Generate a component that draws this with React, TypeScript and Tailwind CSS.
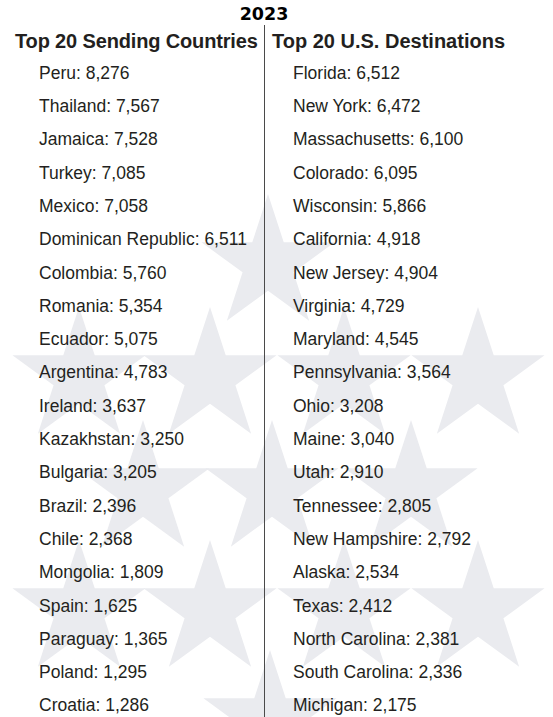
import React from "react";

const countries: [string, string][] = [
  ["Peru", "8,276"],
  ["Thailand", "7,567"],
  ["Jamaica", "7,528"],
  ["Turkey", "7,085"],
  ["Mexico", "7,058"],
  ["Dominican Republic", "6,511"],
  ["Colombia", "5,760"],
  ["Romania", "5,354"],
  ["Ecuador", "5,075"],
  ["Argentina", "4,783"],
  ["Ireland", "3,637"],
  ["Kazakhstan", "3,250"],
  ["Bulgaria", "3,205"],
  ["Brazil", "2,396"],
  ["Chile", "2,368"],
  ["Mongolia", "1,809"],
  ["Spain", "1,625"],
  ["Paraguay", "1,365"],
  ["Poland", "1,295"],
  ["Croatia", "1,286"],
];

const states: [string, string][] = [
  ["Florida", "6,512"],
  ["New York", "6,472"],
  ["Massachusetts", "6,100"],
  ["Colorado", "6,095"],
  ["Wisconsin", "5,866"],
  ["California", "4,918"],
  ["New Jersey", "4,904"],
  ["Virginia", "4,729"],
  ["Maryland", "4,545"],
  ["Pennsylvania", "3,564"],
  ["Ohio", "3,208"],
  ["Maine", "3,040"],
  ["Utah", "2,910"],
  ["Tennessee", "2,805"],
  ["New Hampshire", "2,792"],
  ["Alaska", "2,534"],
  ["Texas", "2,412"],
  ["North Carolina", "2,381"],
  ["South Carolina", "2,336"],
  ["Michigan", "2,175"],
];

const R = 70;
// [cx, topY]
const stars: [number, number][] = [
  [268, 194],
  [79, 307],
  [210, 307],
  [344, 307],
  [478, 307],
  [143, 420],
  [272, 420],
  [411, 420],
  [79, 540],
  [210, 540],
  [344, 540],
  [478, 540],
  [270, 650],
];

function starPoints(cx: number, top: number) {
  const cy = top + R;
  const r = R * 0.382;
  const pts: string[] = [];
  for (let i = 0; i < 10; i++) {
    const a = -Math.PI / 2 + (i * Math.PI) / 5;
    const rad = i % 2 === 0 ? R : r;
    pts.push(`${(cx + rad * Math.cos(a)).toFixed(2)},${(cy + rad * Math.sin(a)).toFixed(2)}`);
  }
  return pts.join(" ");
}

function Row({ label, value }: { label: string; value: string }) {
  return (
    <div className="h-[33.3px] leading-[33.3px] whitespace-nowrap">
      {label}: {value}
    </div>
  );
}

export default function App() {
  return (
    <div
      className="relative w-[553px] h-[717px] overflow-hidden bg-white text-[#231f20]"
      style={{ fontFamily: '"Liberation Sans", Arial, sans-serif' }}
    >
      <svg className="absolute inset-0" width="553" height="717" viewBox="0 0 553 717">
        {stars.map(([x, y], i) => (
          <polygon key={i} points={starPoints(x, y)} fill="#eaebef" />
        ))}
      </svg>
      <div className="relative">
        <div
          className="h-[25px] w-[528px] pt-[4px] text-center text-[17.5px] leading-[20px] font-bold text-black"
          style={{ fontFamily: '"DejaVu Sans", Verdana, sans-serif' }}
        >
          2023
        </div>
        <div className="flex">
          <div className="w-[265px] border-r border-[#4a4a4a] h-[700px]">
            <div className="h-[31.8px] pt-[3.7px] pl-[15px] text-[20px] leading-[24px] font-bold tracking-[-0.15px] whitespace-nowrap">
              Top 20 Sending Countries
            </div>
            <div className="pl-[39px] text-[17.5px]">
              {countries.map(([l, v]) => (
                <Row key={l} label={l} value={v} />
              ))}
            </div>
          </div>
          <div className="flex-1">
            <div className="h-[31.8px] pt-[3.7px] pl-[7px] text-[20px] leading-[24px] font-bold whitespace-nowrap">
              Top 20 U.S. Destinations
            </div>
            <div className="pl-[28px] text-[17.5px]">
              {states.map(([l, v]) => (
                <Row key={l} label={l} value={v} />
              ))}
            </div>
          </div>
        </div>
      </div>
    </div>
  );
}
